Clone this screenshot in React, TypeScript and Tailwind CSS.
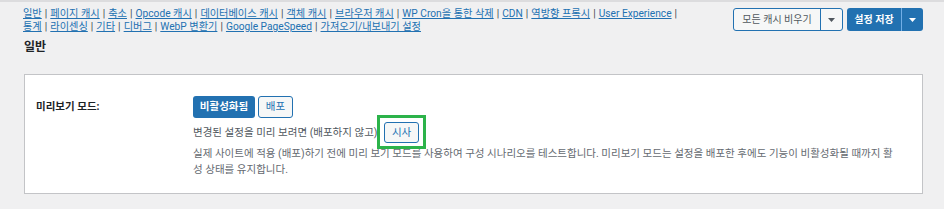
import React from "react";

const row1 = [
  "일반",
  "페이지 캐시",
  "축소",
  "Opcode 캐시",
  "데이터베이스 캐시",
  "객체 캐시",
  "브라우저 캐시",
  "WP Cron을 통한 삭제",
  "CDN",
  "역방향 프록시",
  "User Experience",
];

const row2 = [
  "통계",
  "라이센싱",
  "기타",
  "디버그",
  "WebP 변환기",
  "Google PageSpeed",
  "가져오기/내보내기 설정",
];

const Caret = ({ color }: { color: string }) => (
  <svg width="7" height="4" viewBox="0 0 7 4" fill={color}>
    <path d="M0 0h7L3.5 4z" />
  </svg>
);

const LinkRow = ({ items, trailing }: { items: string[]; trailing: boolean }) => (
  <div className="whitespace-nowrap">
    {items.map((l, i) => (
      <span key={l}>
        <a href="#" className="text-[#2271b1] underline">
          {l}
        </a>
        {(trailing || i < items.length - 1) && (
          <span className="text-[#3c434a] px-[0.5px]"> | </span>
        )}
      </span>
    ))}
  </div>
);

const App: React.FC = () => {
  return (
    <div
      className="w-[944px] h-[209px] bg-[#f0f0f1] overflow-hidden text-[#1d2327]"
      style={{ fontFamily: 'Roboto, "Noto Sans CJK KR", sans-serif' }}
    >
      <div className="h-[2px] bg-[#dcdcde]" />

      {/* top bar: tab links + actions */}
      <div className="flex items-start pt-[5px]">
        <nav className="ml-[23px] text-[10.2px] leading-[13px]">
          <LinkRow items={row1} trailing />
          <LinkRow items={row2} trailing={false} />
        </nav>

        <div className="ml-auto mr-[21px] flex gap-[4px] pt-[1px]">
          <div className="flex h-[23px] border border-[#2271b1] rounded-[3px] bg-[#f6f7f7]">
            <button className="w-[87px] text-[10px] text-[#50575e] border-r border-[#2271b1]">
              모든 캐시 비우기
            </button>
            <button className="w-[21px] flex items-center justify-center">
              <Caret color="#50575e" />
            </button>
          </div>
          <div className="flex h-[23px] rounded-[3px] bg-[#2271b1]">
            <button className="w-[55px] text-[10px] font-semibold text-white border-r border-[#72aee6]">
              설정 저장
            </button>
            <button className="w-[21px] flex items-center justify-center">
              <Caret color="#ffffff" />
            </button>
          </div>
        </div>
      </div>

      <h2 className="pl-[24px] mt-[6px] text-[12px] leading-[16px] font-bold">일반</h2>

      {/* settings panel */}
      <div className="ml-[24px] mr-[21px] mt-[19px] h-[120px] bg-white border border-[#c3c4c7] flex pl-[11px] pt-[21px]">
        <div className="w-[157px] pt-[4px] text-[10.5px] leading-[14px] font-bold">미리보기 모드:</div>

        <div className="flex-1">
          <div className="flex gap-[3px]">
            <button className="h-[22px] w-[62px] rounded-[3px] bg-[#2271b1] text-white text-[10.5px] font-semibold">
              비활성화됨
            </button>
            <button className="h-[22px] w-[35px] rounded-[3px] border border-[#2271b1] bg-[#f6f7f7] text-[#2271b1] text-[10.5px]">
              배포
            </button>
          </div>

          <div className="flex items-center gap-[4px] mt-[4px] text-[10.5px] text-[#50575e]">
            <span>변경된 설정을 미리 보려면 (배포하지 않고):</span>
            <div className="relative">
              <button className="h-[21px] w-[35px] rounded-[3px] border border-[#2271b1] bg-[#f6f7f7] text-[#2271b1] text-[10.5px]">
                시사
              </button>
              <div className="absolute -left-[7px] -right-[7px] -top-[7px] -bottom-[6px] border-[3px] border-[#2cb34a]" />
            </div>
          </div>

          <p className="w-[708px] mt-[3px] text-[10.5px] leading-[16px] text-[#646970]">
            실제 사이트에 적용 (배포)하기 전에 미리 보기 모드를 사용하여 구성 시나리오를 테스트합니다. 미리보기 모드는 설정을 배포한 후에도 기능이 비활성화될 때까지 활성 상태를 유지합니다.
          </p>
        </div>
      </div>
    </div>
  );
};

export default App;
